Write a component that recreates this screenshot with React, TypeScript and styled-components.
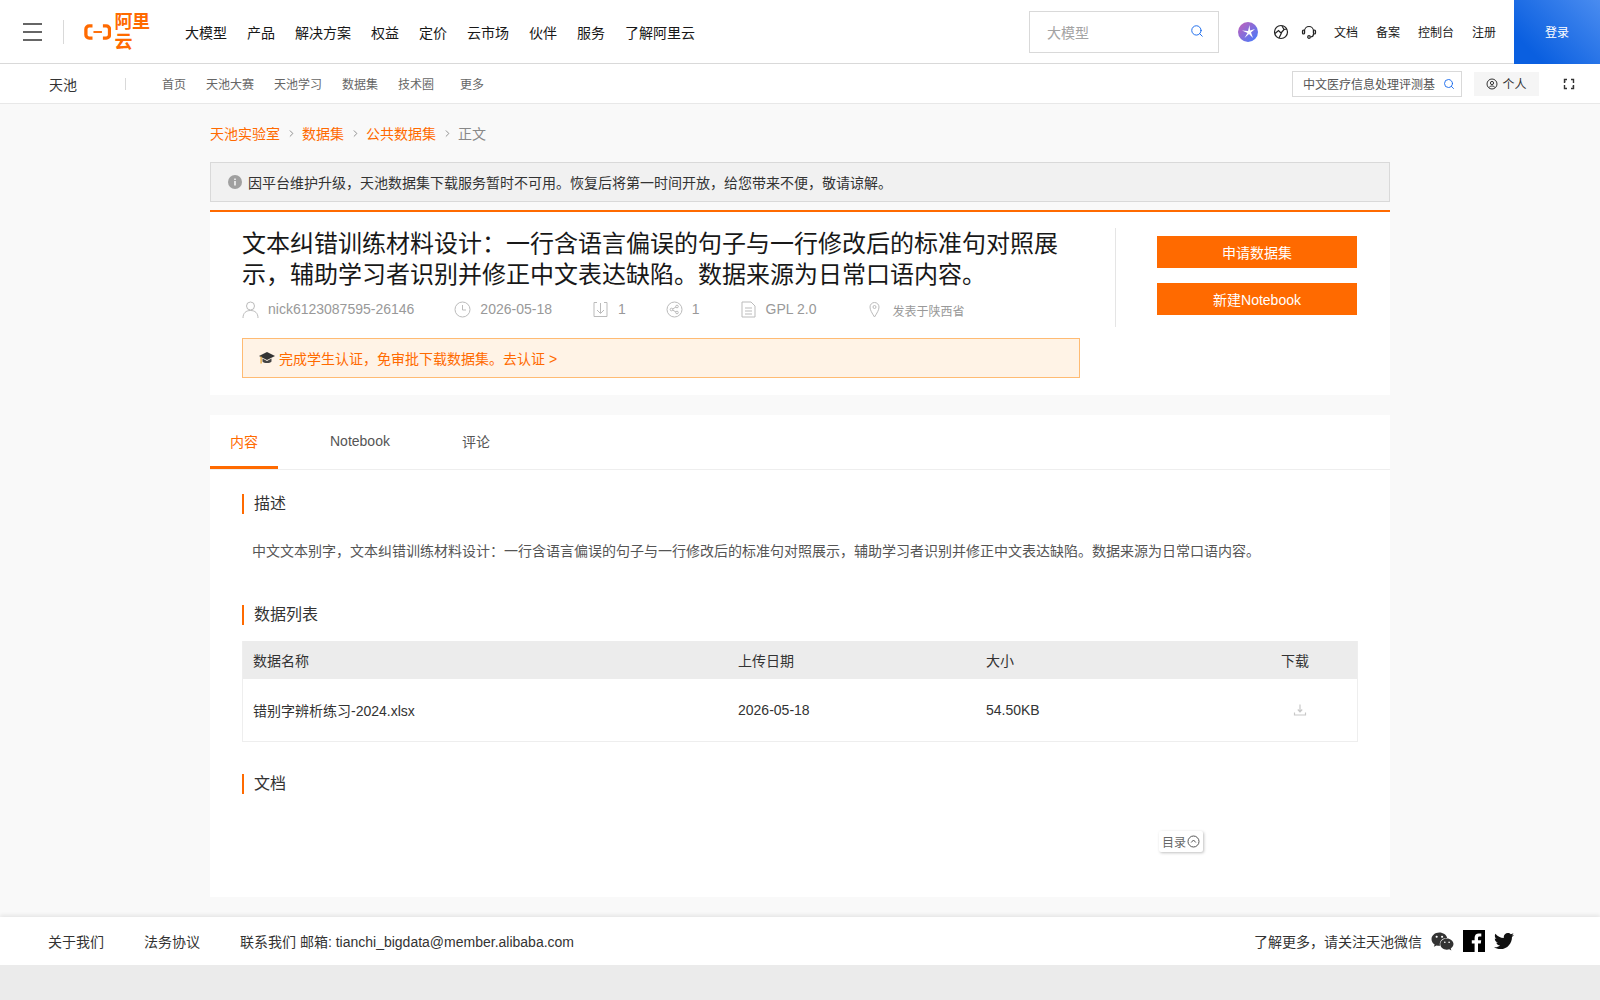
import styled, { createGlobalStyle } from "styled-components";
import { FaTwitter, FaWeixin } from "react-icons/fa";
import { ChevronRight, Search } from "lucide-react";

const ORANGE = "#ff6a00";

const GlobalStyle = createGlobalStyle`
  html, body {
    margin: 0;
    padding: 0;
    background: #f9f9f9;
    font-family: "Liberation Sans", "Noto Sans CJK SC", sans-serif;
    color: #333;
  }
  * { box-sizing: border-box; }
`;

const TopBar = styled.header`
  height: 64px;
  display: flex;
  align-items: center;
  background: #fff;
  border-bottom: 1px solid #d9d9d9;
`;

const Burger = styled.div`
  width: 19px;
  margin-left: 23px;
  display: flex;
  flex-direction: column;
  gap: 6px;

  span {
    display: block;
    height: 2px;
    background: #666;
  }
`;

const TopDivider = styled.div`
  width: 1px;
  height: 24px;
  margin: 0 20px 0 21px;
  background: #d9d9d9;
`;

const Logo = styled.div`
  display: flex;
  align-items: center;
  gap: 3px;
  width: 80px;
  color: ${ORANGE};
  font-size: 18px;
  font-weight: 700;
  letter-spacing: -0.5px;
  line-height: 20px;
`;

const MainNav = styled.nav`
  display: flex;
  gap: 20px;
  margin-left: 21px;
  font-size: 14px;
  color: #181818;
`;

const TopSearch = styled.div`
  width: 190px;
  height: 42px;
  margin-left: auto;
  padding: 0 14px 0 17px;
  display: flex;
  align-items: center;
  justify-content: space-between;
  border: 1px solid #d9d9d9;
  font-size: 14px;
  color: #a3a3a3;

  svg { margin-top: -2px; }
`;

const TopIcons = styled.div`
  display: flex;
  align-items: center;
  margin-left: 19px;
  height: 20px;
`;

const TopIcon = styled.svg<{ $gap: number }>`
  display: block;
  margin-right: ${({ $gap }) => $gap}px;
`;

const TopLinks = styled.div`
  display: flex;
  gap: 18px;
  font-size: 12px;
  color: #181818;
`;

const LoginButton = styled.div`
  width: 86px;
  height: 64px;
  margin-left: 18px;
  display: flex;
  align-items: center;
  justify-content: center;
  font-size: 12px;
  color: #fff;
  background: linear-gradient(45deg, #0a5fe0 20%, #4a8cf0 100%);
`;

const SubBar = styled.div`
  height: 40px;
  display: flex;
  align-items: center;
  background: #fff;
  border-bottom: 1px solid #e8e8e8;
`;

const SubTitle = styled.div`
  margin-left: 49px;
  width: 76px;
  font-size: 14px;
  color: #333;
`;

const SubDivider = styled.div`
  width: 1px;
  height: 12px;
  background: #d9d9d9;
`;

const SubNav = styled.nav`
  display: flex;
  gap: 20px;
  margin-left: 36px;
  font-size: 12px;
  color: #666;
`;

const SubItem = styled.span<{ $extra?: number }>`
  margin-left: ${({ $extra }) => $extra ?? 0}px;
`;

const SubSearch = styled.div`
  width: 170px;
  height: 26px;
  margin-left: auto;
  padding: 0 6px 0 10px;
  display: flex;
  align-items: center;
  justify-content: space-between;
  border: 1px solid #d9d9d9;
  font-size: 12px;
  color: #555;
  white-space: nowrap;
`;

const PersonalButton = styled.div`
  width: 65px;
  height: 24px;
  margin: 0 24px 0 12px;
  display: flex;
  align-items: center;
  justify-content: center;
  gap: 4px;
  background: #f5f5f5;
  font-size: 12px;
  color: #333;
`;

const SwapIcon = styled.svg`
  margin-right: 25px;
`;

const Main = styled.main`
  width: 1180px;
  margin: 0 auto;
`;

const Breadcrumb = styled.div`
  height: 58px;
  display: flex;
  align-items: center;
  font-size: 14px;
  color: ${ORANGE};

  svg { margin: 0 5px 0 6px; color: #888; }
  span:last-child { color: #888; }
`;

const Notice = styled.div`
  height: 40px;
  padding-left: 17px;
  display: flex;
  align-items: center;
  gap: 6px;
  background: #f1f1f1;
  border: 1px solid #d9d9d9;
  font-size: 14px;
  color: #333;
`;

const DetailCard = styled.section`
  margin-top: 8px;
  height: 185px;
  padding: 16px 0 0 32px;
  display: flex;
  background: #fff;
  border-top: 2px solid ${ORANGE};
`;

const DetailBody = styled.div`
  width: 838px;
`;

const Title = styled.h1`
  margin: 0;
  width: 830px;
  font-size: 24px;
  font-weight: 400;
  line-height: 31px;
  color: #181818;
`;

const MetaRow = styled.div`
  height: 20px;
  margin-top: 9px;
  display: flex;
  align-items: center;
  font-size: 14px;
  color: #999;
`;

const MetaItem = styled.div<{ $gap?: number }>`
  display: flex;
  align-items: center;
  gap: 9px;
  margin-right: ${({ $gap }) => $gap ?? 40}px;
`;

const MetaSmall = styled.span`
  font-size: 12px;
  margin-top: 2px;
`;

const StudentBanner = styled.div`
  height: 40px;
  margin-top: 19px;
  padding-left: 16px;
  display: flex;
  align-items: center;
  gap: 4px;
  background: #fff3e6;
  border: 1px solid #ffbb73;
  font-size: 14px;
  color: ${ORANGE};
`;

const ActionColumn = styled.div`
  width: 241px;
  height: 99px;
  margin-left: 35px;
  padding: 8px 0 0 41px;
  display: flex;
  flex-direction: column;
  gap: 15px;
  border-left: 1px solid #e5e5e5;
`;

const ActionButton = styled.div`
  width: 200px;
  height: 32px;
  display: flex;
  align-items: center;
  justify-content: center;
  background: ${ORANGE};
  color: #fff;
  font-size: 14px;
`;

const ContentCard = styled.section`
  position: relative;
  margin-top: 20px;
  height: 482px;
  background: #fff;
`;

const Tabs = styled.div`
  height: 55px;
  display: flex;
  gap: 32px;
  border-bottom: 1px solid #eee;
`;

const Tab = styled.div<{ $active?: boolean }>`
  padding: 0 20px;
  display: flex;
  align-items: center;
  font-size: 14px;
  color: ${({ $active }) => ($active ? ORANGE : "#555")};
  border-bottom: 3px solid ${({ $active }) => ($active ? ORANGE : "transparent")};
`;

const Sections = styled.div`
  padding: 24px 32px 0;
`;

const SectionTitle = styled.h2<{ $top?: number }>`
  margin: ${({ $top }) => $top ?? 0}px 0 0;
  height: 20px;
  padding-left: 10px;
  border-left: 2px solid ${ORANGE};
  font-size: 16px;
  font-weight: 400;
  line-height: 20px;
  color: #333;
`;

const Description = styled.p`
  margin: 27px 0 0 10px;
  font-size: 14px;
  line-height: 20px;
  color: #555;
`;

const TableWrap = styled.div`
  margin-top: 16px;
  border: 1px solid #eee;
  border-top: 0;
`;

const TableRow = styled.div<{ $head?: boolean }>`
  height: ${({ $head }) => ($head ? 38 : 62)}px;
  display: grid;
  grid-template-columns: 485px 248px 295px 1fr;
  align-items: center;
  padding-left: 10px;
  background: ${({ $head }) => ($head ? "#ececec" : "#fff")};
  font-size: 14px;
  color: #333;
`;

const DownloadIcon = styled.svg`
  display: block;
  margin-left: 12px;
`;

const TocFloat = styled.div`
  position: absolute;
  left: 949px;
  top: 416px;
  width: 44px;
  height: 21px;
  padding-left: 3px;
  display: flex;
  align-items: center;
  gap: 1px;
  background: #fff;
  border-radius: 2px;
  box-shadow: 1px 1px 3px rgba(0, 0, 0, 0.25);
  font-size: 12px;
  color: #666;
`;

const Footer = styled.footer`
  margin-top: 20px;
  height: 48px;
  padding: 0 86px 0 48px;
  display: flex;
  align-items: center;
  gap: 40px;
  background: #fff;
  box-shadow: 0 -2px 4px rgba(0, 0, 0, 0.08);
  font-size: 14px;
  color: #333;
`;

const FooterRight = styled.div`
  margin-left: auto;
  display: flex;
  align-items: center;
  gap: 9px;
`;

const FooterIcons = styled.div`
  display: flex;
  align-items: center;
  gap: 9px;
  color: #333;
`;

const PageEnd = styled.div`
  height: 35px;
  background: #ebebeb;
`;

function LogoMark() {
  return (
    <svg width="29" height="18" viewBox="0 0 29 18" fill="none">
      <path
        d="M9 2.5H5.5C3.5 2.5 2 4 2 6v6c0 2 1.500 3.500 3.500 3.500H9M20 2.500h3.500C25.500 2.500 27 4 27 6v6c0 2-1.500 3.500-3.500 3.500H20"
        stroke={ORANGE}
        strokeWidth="3.500"
      />
      <rect x="10" y="8" width="9" height="2" fill={ORANGE} />
    </svg>
  );
}

function MetaIcon({ children }: { children: React.ReactNode }) {
  return (
    <svg width="17" height="17" viewBox="0 0 17 17" fill="none" stroke="#bbb" strokeWidth="1">
      {children}
    </svg>
  );
}

function GraduationHat() {
  return (
    <svg width="16" height="16" viewBox="0 0 16 16">
      <path d="M8 2 16 6 8 10 0 6Z" fill="#333" />
      <path d="M3.500 8.500V11.500C5 13.500 11 13.500 12.500 11.500V8.500L8 11Z" fill="#444" />
      <rect x="1.500" y="6.500" width="1.200" height="7" fill="#e0a030" />
    </svg>
  );
}

export default function App() {
  return (
    <>
      <GlobalStyle />
      <TopBar>
        <Burger>
          <span />
          <span />
          <span />
        </Burger>
        <TopDivider />
        <Logo>
          <LogoMark />
          <span>阿里云</span>
        </Logo>
        <MainNav>
          {["大模型", "产品", "解决方案", "权益", "定价", "云市场", "伙伴", "服务", "了解阿里云"].map((label) => (
            <span key={label}>{label}</span>
          ))}
        </MainNav>
        <TopSearch>
          <span>大模型</span>
          <Search size={14} color="#1366ec" strokeWidth={1.6} />
        </TopSearch>
        <TopIcons>
          <TopIcon $gap={15} width="20" height="20" viewBox="0 0 20 20">
            <defs>
              <linearGradient id="spark" x1="0" y1="0" x2="1" y2="1">
                <stop offset="0" stopColor="#c65fb8" />
                <stop offset="1" stopColor="#3f7cff" />
              </linearGradient>
            </defs>
            <circle cx="10" cy="10" r="10" fill="url(#spark)" />
            <path d="M11.500 3 10 9 4 8.500 9.500 11 6.500 16 11 12 15 16 13 10.500 17 7 12 8.500Z" fill="#fff" />
          </TopIcon>
          <TopIcon $gap={12} width="16" height="16" viewBox="0 0 16 16" fill="none" stroke="#222" strokeWidth="1.200">
            <circle cx="8" cy="8" r="6.500" />
            <path d="M2 9.500 5.500 6.500 8 9 11 5.500 14 5M6 14 8.500 9M9 2 11 5.500" />
          </TopIcon>
          <TopIcon $gap={17} width="16" height="16" viewBox="0 0 16 16" fill="none" stroke="#222" strokeWidth="1.200">
            <path d="M3.500 9.500V7a4.500 4.500 0 0 1 9 0v2.500" />
            <rect x="1.500" y="6" width="2" height="4" rx="1" />
            <rect x="12.500" y="6" width="2" height="4" rx="1" />
            <path d="M12.500 10c0 2-1.500 3-3 3" />
            <circle cx="8" cy="13" r="1.300" />
          </TopIcon>
          <TopLinks>
            <span>文档</span>
            <span>备案</span>
            <span>控制台</span>
            <span>注册</span>
          </TopLinks>
        </TopIcons>
        <LoginButton>登录</LoginButton>
      </TopBar>

      <SubBar>
        <SubTitle>天池</SubTitle>
        <SubDivider />
        <SubNav>
          <SubItem>首页</SubItem>
          <SubItem>天池大赛</SubItem>
          <SubItem>天池学习</SubItem>
          <SubItem>数据集</SubItem>
          <SubItem>技术圈</SubItem>
          <SubItem $extra={6}>更多</SubItem>
        </SubNav>
        <SubSearch>
          <span>中文医疗信息处理评测基</span>
          <Search size={12} color="#1366ec" strokeWidth={1.8} />
        </SubSearch>
        <PersonalButton>
          <svg width="12" height="12" viewBox="0 0 12 12" fill="none" stroke="#333">
            <circle cx="6" cy="6" r="5" />
            <circle cx="6" cy="5" r="1.600" />
            <path d="M3 9.500C4 7.500 8 7.500 9 9.500" />
          </svg>
          <span>个人</span>
        </PersonalButton>
        <SwapIcon width="12" height="12" viewBox="0 0 12 12" fill="none" stroke="#333" strokeWidth="1.400">
          <path d="M4 1.500H1.500V5M8 1.500H10.500V5M4 10.500H1.500V7M8 10.500H10.500V7M1 3.500H2.500M9.500 8.500H11" />
        </SwapIcon>
      </SubBar>

      <Main>
        <Breadcrumb>
          <span>天池实验室</span>
          <ChevronRight size={11} />
          <span>数据集</span>
          <ChevronRight size={11} />
          <span>公共数据集</span>
          <ChevronRight size={11} />
          <span>正文</span>
        </Breadcrumb>

        <Notice>
          <svg width="14" height="14" viewBox="0 0 14 14">
            <circle cx="7" cy="7" r="7" fill="#a0a0a0" />
            <rect x="6.300" y="6" width="1.400" height="4.500" fill="#fff" />
            <rect x="6.300" y="3.500" width="1.400" height="1.500" fill="#fff" />
          </svg>
          <span>因平台维护升级，天池数据集下载服务暂时不可用。恢复后将第一时间开放，给您带来不便，敬请谅解。</span>
        </Notice>

        <DetailCard>
          <DetailBody>
            <Title>文本纠错训练材料设计：一行含语言偏误的句子与一行修改后的标准句对照展示，辅助学习者识别并修正中文表达缺陷。数据来源为日常口语内容。</Title>
            <MetaRow>
              <MetaItem>
                <MetaIcon>
                  <circle cx="8.500" cy="5" r="4" />
                  <path d="M1 17c0-5 3-7.500 7.500-7.500S16 12 16 17" />
                </MetaIcon>
                <span>nick6123087595-26146</span>
              </MetaItem>
              <MetaItem>
                <MetaIcon>
                  <circle cx="8.500" cy="8.500" r="7.500" />
                  <path d="M8.500 4v5H12" />
                </MetaIcon>
                <span>2026-05-18</span>
              </MetaItem>
              <MetaItem>
                <MetaIcon>
                  <path d="M5 1.500H2V15.500H15V1.500H12M8.500 2V12M5 9l3.500 3.500L12 9" />
                </MetaIcon>
                <span>1</span>
              </MetaItem>
              <MetaItem>
                <MetaIcon>
                  <circle cx="8.500" cy="8.500" r="7.500" />
                  <circle cx="5.500" cy="8.500" r="1.300" />
                  <circle cx="11" cy="5.500" r="1.300" />
                  <circle cx="11" cy="11.500" r="1.300" />
                  <path d="M6.500 8 10 6M6.500 9 10 11" />
                </MetaIcon>
                <span>1</span>
              </MetaItem>
              <MetaItem $gap={50}>
                <MetaIcon>
                  <path d="M2 1h9l4 4v11H2ZM5 7h7M5 10h7M5 13h7" />
                </MetaIcon>
                <span>GPL 2.0</span>
              </MetaItem>
              <MetaItem>
                <MetaIcon>
                  <path d="M8.500 16C6 12 4 9 4 6a4.500 4.500 0 0 1 9 0c0 3-2 6-4.500 10Z" />
                  <circle cx="8.500" cy="6" r="1.500" />
                </MetaIcon>
                <MetaSmall>发表于陕西省</MetaSmall>
              </MetaItem>
            </MetaRow>
            <StudentBanner>
              <GraduationHat />
              <span>完成学生认证，免审批下载数据集。去认证 &gt;</span>
            </StudentBanner>
          </DetailBody>
          <ActionColumn>
            <ActionButton>申请数据集</ActionButton>
            <ActionButton>新建Notebook</ActionButton>
          </ActionColumn>
        </DetailCard>

        <ContentCard>
          <Tabs>
            <Tab $active>内容</Tab>
            <Tab>Notebook</Tab>
            <Tab>评论</Tab>
          </Tabs>
          <Sections>
            <SectionTitle>描述</SectionTitle>
            <Description>中文文本别字，文本纠错训练材料设计：一行含语言偏误的句子与一行修改后的标准句对照展示，辅助学习者识别并修正中文表达缺陷。数据来源为日常口语内容。</Description>
            <SectionTitle $top={44}>数据列表</SectionTitle>
            <TableWrap>
              <TableRow $head>
                <span>数据名称</span>
                <span>上传日期</span>
                <span>大小</span>
                <span>下载</span>
              </TableRow>
              <TableRow>
                <span>错别字辨析练习-2024.xlsx</span>
                <span>2026-05-18</span>
                <span>54.50KB</span>
                <DownloadIcon width="14" height="14" viewBox="0 0 14 14" fill="none" stroke="#c8c8c8" strokeWidth="1.200">
                  <path d="M7 1.500V8.500M4.800 6.500 7 8.800 9.200 6.500M1.500 9.500V12H12.500V9.500" />
                </DownloadIcon>
              </TableRow>
            </TableWrap>
            <SectionTitle $top={32}>文档</SectionTitle>
          </Sections>
          <TocFloat>
            <span>目录</span>
            <svg width="13" height="13" viewBox="0 0 13 13" fill="none" stroke="#555">
              <circle cx="6.500" cy="6.500" r="5.500" />
              <path d="M4.200 7.500 6.500 5 8.800 7.500" />
            </svg>
          </TocFloat>
        </ContentCard>
      </Main>

      <Footer>
        <span>关于我们</span>
        <span>法务协议</span>
        <span>联系我们 邮箱: tianchi_bigdata@member.alibaba.com</span>
        <FooterRight>
          <span>了解更多，请关注天池微信</span>
          <FooterIcons>
            <FaWeixin size={23} />
            <svg width="22" height="22" viewBox="0 0 22 22">
              <rect width="22" height="22" fill="#000" />
              <path d="M15 22v-8.500h2.800l.4-3.300H15V8.100c0-1 .3-1.600 1.600-1.600h1.700V3.600c-.3 0-1.300-.1-2.500-.1-2.500 0-4.200 1.500-4.200 4.300v2.400H8.800v3.300h2.800V22Z" fill="#fff" />
            </svg>
            <FaTwitter size={20} color="#111" />
          </FooterIcons>
        </FooterRight>
      </Footer>
      <PageEnd />
    </>
  );
}
